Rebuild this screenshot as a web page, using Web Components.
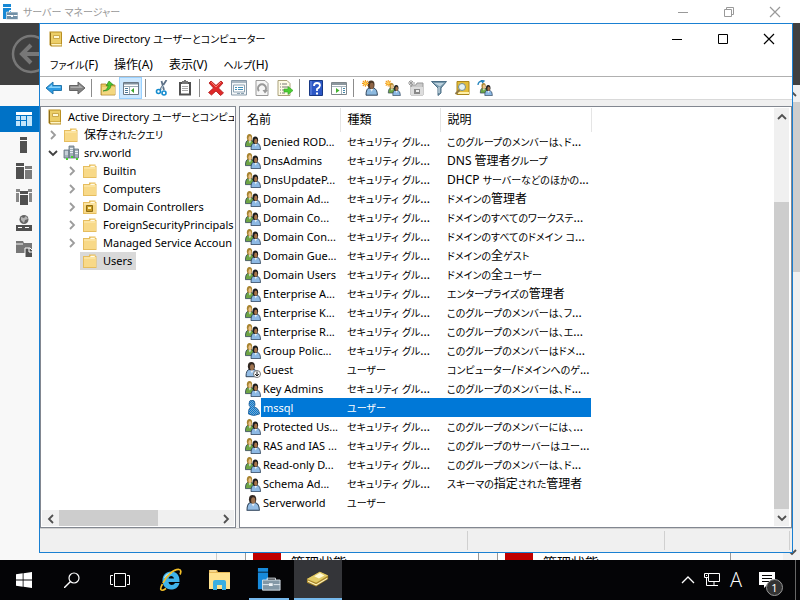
<!DOCTYPE html>
<html lang="ja">
<head>
<meta charset="utf-8">
<title>Active Directory ユーザーとコンピューター</title>
<style>
html,body{margin:0;height:100%}
body{font-family:"Noto Sans","Noto Sans CJK JP",sans-serif;font-size:12px;line-height:18px;color:#000;font-feature-settings:"palt";overflow:hidden}
</style>
</head>
<body>
<desktop-shell></desktop-shell>
<script>
const folder='<path d="M1 3h6V1.500h6.500V3h1v12H1z" fill="#e6bd5e"/><path d="M2 4h6l1-1.500h4V4h.8v10H2z" fill="#fbe3a0"/><path d="M8.500 3.500h4" stroke="#fffbe8"/><path d="M2 6h11.800v8H2z" fill="#f8d988"/>';
const person=(x,y,hair,body,face,sx=1,sy=1)=>`<g transform="translate(${x} ${y}) scale(${sx} ${sy})"><path d="M0 10.500Q0 5.500 3 5.200L6 5.200Q9.500 6 9.500 10.500z" fill="${body}" stroke="#263b52" stroke-width=".7"/><ellipse cx="4.300" cy="3" rx="2.800" ry="3" fill="${hair}"/><ellipse cx="4.800" cy="3.800" rx="1.600" ry="2.200" fill="${face}"/><path d="M3.500 6l1.200 2L6 6z" fill="#e6eef5"/></g>`;
const star='<path d="M4 0v8M0 4h8M1 1l6 6M7 1L1 7" stroke="#f39a16" stroke-width="1.300"/><circle cx="4" cy="4" r="1.500" fill="#ffd75c"/>';
const two=person(.4,0,'#a88430','#6ea545','#e8c28a',.95,1.2)+person(6,2.500,'#1c1c1c','#8db9e4','#a8754b',1,1.25);
const ICONS={
folder,
ou:folder+'<path d="M4.500 6.500h6v6h-6z" fill="#c99b22" stroke="#8c6b13"/><path d="M6 8h3v2H6z" fill="#fff0a8"/>',
book:'<path d="M1.500 .5h12l.5 1v14H3l-1.500-1.500z" fill="#b98f22"/><path d="M3 1.500h10v11H3z" fill="#ecce68"/><path d="M3 13h10.500v1.500H4z" fill="#fff6ca"/><path d="M5.500 4.500h6v3h-6z" fill="#fff8d6" stroke="#c09b37" stroke-width=".8"/><path d="M2.500 2v12" stroke="#8f6d18"/>',
domain:'<path d="M1 5h5v8H1zM6 1h5v12H6zM11 4h4.500v9H11z" fill="#a3b0ba" stroke="#60717f" stroke-width=".8"/><path d="M2 7h3M2 9h3M7 3.500h3M7 5.500h3M7 7.500h3M12 6.500h3M12 8.500h3" stroke="#e8eff4"/><path d="M3 13h2v2H3zM8 11h2v2H8zM13 13h2v2h-2z" fill="#46d52c"/>',
group:two,
user:person(2,0,'#332821','#94bde5','#9e7350',1.3,1.45),
guest:person(1,0,'#332821','#94bde5','#9e7350',1.25,1.4)+'<circle cx="12" cy="12" r="3.500" fill="#fff" stroke="#777"/><path d="M12 9.500v4M10.200 12l1.800 2 1.800-2" stroke="#111" fill="none"/>',
picked:'<defs><pattern id="p" width="2" height="2" patternUnits="userSpaceOnUse"><rect width="2" height="2" fill="#0078d7"/><path d="M0 0h1v1H0zM1 1h1v1H1z" fill="#80a9c7"/></pattern></defs><path d="M4 4q0-4 3-4t3 4q0 2-1 3 5 1 5.500 7-6 3-11 0-.5-5 2-7-1.500-1-1.500-3z" fill="url(#p)" stroke="#155995" stroke-width=".8"/>',
back:'<path d="M0 8l7-6v3.500h8.500v5H7V14z" fill="#2d9be3" stroke="#2477ad"/><path d="M2 8l4-3.500v2h8.500v1.500z" fill="#87d2fa"/>',
fwd:'<path d="M16 8L9 2v3.500H.5v5H9V14z" fill="#838383" stroke="#646464"/><path d="M14 8l-4-3.500v2H1.500V8z" fill="#acacac"/>',
up:'<path d="M1 4h5l1 1h8v10H1z" fill="#e9c65e" stroke="#aa812b" stroke-width=".8"/><path d="M2 7h13v7.500H2z" fill="#f3d780"/><path d="M3 11q5-1 5-6L6 6l3-5 4.500 4H11Q11 11 3 11z" fill="#4ac62d" stroke="#287f1f" stroke-width=".6"/>',
pane:'<path d="M.5 2.500h15v12H.5z" fill="#fff" stroke="#6c7985"/><path d="M1 3h14v1.500H1z" fill="#8494a1"/><path d="M1 6.500h14M6.500 7v7" stroke="#9cabb7"/><path d="M2 8.500h3M2 10.500h3M2 12.500h3" stroke="#4d7997"/><path d="M11 8v5l-3-2.500z" fill="#39a327"/>',
cut:'<path d="M12.500 0L6 10M7.500 1l2.500 9" stroke="#5e7187" stroke-width="1.800"/><path d="M7 9l3-4" stroke="#c8dce8"/><circle cx="4.500" cy="11.500" r="2" fill="none" stroke="#168dcf" stroke-width="1.600"/><circle cx="10" cy="13" r="2" fill="none" stroke="#168dcf" stroke-width="1.600"/>',
paste:'<path d="M2 2h12v13.500H2z" fill="#505050"/><path d="M4 4h8v9.500H4z" fill="#fff"/><path d="M5 1h2V0h2v1h2v3H5z" fill="#777"/><path d="M5 6.500h6M5 8.500h6M5 10.500h6" stroke="#aaa"/>',
del:'<path d="M1 3l2-2 5 4.500L13 1l2 2-4.500 5 5 5-3 2.500L8 11l-4.500 4L.5 12.500 5.500 8z" fill="#df2929" stroke="#b01717" stroke-width=".8"/><path d="M3 2l5 5 5-5" stroke="#f67b6b" fill="none"/>',
prop:'<path d="M.5 .5h15v14.500H.5z" fill="#f4f7f9" stroke="#8799a8"/><path d="M1 1h14v2H1z" fill="#a9b7c2"/><path d="M2.500 5h11v7h-11z" fill="#fff" stroke="#8da2b2"/><path d="M4 7.500h2M7 7.500h5M4 9.500h2M7 9.500h5" stroke="#3f90b9"/><path d="M6 13.500h3M10 13.500h3" stroke="#8ba2b2"/>',
refresh:'<path d="M2 .5h9l3 3v12H2z" fill="#f6f6f6" stroke="#999"/><path d="M5 11a4 4 0 1 1 6 0" fill="none" stroke="#999" stroke-width="2"/><path d="M8.500 10H14l-3 3.500z" fill="#999"/>',
export:'<path d="M1 .5h9l3 3v12H1z" fill="#fffbe6" stroke="#aaa17b"/><path d="M3 4h1M5 4h5M3 7h1M5 7h6M3 10h1M5 10h3M3 13h1M5 13h3" stroke="#777"/><path d="M7 9h4V6.500l5 4-5 4V12H7z" fill="#4dce33" stroke="#38a928" stroke-width=".7"/>',
help:'<path d="M1.500 .5h13v15h-13z" fill="#2c57c5" stroke="#173783"/><path d="M3 1v14" stroke="#6e90e5"/><path d="M6 6Q6 3 9 3t3 2.500Q12 7 9 9v2" stroke="#fff" stroke-width="1.800" fill="none"/><path d="M8 12.500h2v2H8z" fill="#fff"/>',
act:'<path d="M.5 2.500h15v12H.5z" fill="#fff" stroke="#7f878c"/><path d="M1 3h14v2H1z" fill="#8c979e"/><path d="M1 6.500h14M10.500 7v7" stroke="#a6b4bd"/><path d="M5 8v5l3.500-2.500z" fill="#42b330"/><path d="M12 8.500h2M12 10.500h2M12 12.500h2" stroke="#4285a5"/>',
newuser:person(4,.5,'#4d3826','#8cb9df','#8e6546',1.2,1.4)+'<g transform="scale(.85)">'+star+'</g>',
newgroup:'<g transform="translate(3 3) scale(.8)">'+two+'</g><g transform="scale(.8)">'+star+'</g>',
newou:'<path d="M3 5h5l1-2h6v12H3z" fill="#c9c9c9" stroke="#999"/><path d="M3 7h12v8H3z" fill="#ddd"/><path d="M6 9h6v5H6z" fill="#888"/><path d="M8 10h3v2H8z" fill="#eee"/><path d="M3 0v7M0 3h7M1 1l4 4M5 1L1 5" stroke="#999"/>',
filter:'<path d="M.5 1.500h15L10 8v5l-3 2.500V8z" fill="#7899ac" stroke="#4c6f86"/><path d="M3 3h10L9 6.500z" fill="#bdd3df"/><path d="M8 7v6" stroke="#dbe8ef"/>',
find:'<path d="M3 1.500h12v13H3z" fill="#e4bd39" stroke="#aa851b"/><path d="M4 12h11v2H4z" fill="#fff0a9"/><circle cx="8" cy="7" r="3.500" fill="#e5f3f6" stroke="#718b92"/><path d="M5.500 10l-4 4" stroke="#8f7846" stroke-width="2"/>',
addto:'<g transform="translate(3 3) scale(.8)">'+two+'</g><path d="M1 5Q1 1 6 1M4 0l3 1-2 2" stroke="#2485be" stroke-width="1.300" fill="none"/>',
sm:'<path d="M1 0h8v3H1zM1 4h8v11H1z" fill="#1688d5"/><path d="M4.500 8h11.500v7.500H4.500z" fill="#7190a6" stroke="#fff" stroke-width=".6"/><path d="M7.500 8V6.500h5V8M5 11.500h4M11.500 11.500h4" fill="none" stroke="#fff"/><path d="M9 11h2v2H9z" fill="#fff"/>',
dash:'<path d="M0 5h4v4H0zM0 10h4v5H0zM5 5h5v4H5zM5 10h5v5H5zM11 5h5v10h-5z" fill="#c3e5fb"/><path d="M0 1h16v3H0z" fill="#fff"/>',
srv:'<path d="M4 0h7v3H4zM4 4h7v12H4z" fill="#505050"/>',
srvs:'<path d="M0 0h8v3H0zM0 4h8v12H0z" fill="#505050"/><path d="M9 3h7v3H9zM9 7h7v9H9z" fill="#7b7b7b"/>',
all:'<path d="M0 0h4v3H0zM12 0h4v3h-4zM0 4h3v9H0zM13 4h3v9h-3z" fill="#888"/><path d="M4 2h8v3H4zM4 6h8v10H4z" fill="#505050"/>',
web:'<circle cx="8" cy="4.500" r="4.500" fill="#666"/><path d="M5 2l3 1 2-2 2 3-3 1-1 3-3-3z" fill="#b5b5b5"/><path d="M0 10h16v6H0z" fill="#505050"/><path d="M2 12.500h4M9 12.500h4" stroke="#fff"/>',
files:'<path d="M0 0h7l1 2h8v10H0z" fill="#777"/><path d="M0 3h7" stroke="#f7f7f7"/><path d="M9 7h5l3 3v7H9z" fill="#505050" stroke="#fff"/><path d="M13 7v4h4" stroke="#fff" fill="none"/>',
circle:'<circle cx="22" cy="22" r="18" fill="none" stroke="#777" stroke-width="2.500"/><path d="M31 22H13M22 13l-9 9 9 9" fill="none" stroke="#777" stroke-width="4"/>',
min:'<path d="M3 8.500h10" stroke="currentColor"/>',
max:'<path d="M3.500 3.500h9v9h-9z" fill="none" stroke="currentColor"/>',
restore:'<path d="M3.500 5.500h7v7h-7zM5.500 5V3.500h7v7H11" fill="none" stroke="currentColor"/>',
close:'<path d="M3 3l10 10M13 3L3 13" stroke="currentColor" stroke-width="1.200"/>',
cr:'<path d="M6 4l4 4-4 4" fill="none" stroke="currentColor" stroke-width="1.800"/>',
cl:'<path d="M10 4L6 8l4 4" fill="none" stroke="currentColor" stroke-width="1.800"/>',
cd:'<path d="M4 6l4 4 4-4" fill="none" stroke="currentColor" stroke-width="1.800"/>',
cu:'<path d="M4 10l4-4 4 4" fill="none" stroke="currentColor" stroke-width="1.800"/>',
tray:'<path d="M2 11l6-6 6 6" fill="none" stroke="#fff" stroke-width="1.300"/>',
win:'<path d="M0 2.300L6.700 1.300V7.600H0zM7.500 1.200L16 0v7.600H7.500zM0 8.400h6.700v6.300L0 13.700zM7.500 8.400H16V16l-8.500-1.200z" fill="#fff"/>',
search:'<circle cx="10" cy="6" r="5" fill="none" stroke="#fff" stroke-width="1.200"/><path d="M6.500 9.500L0 16" stroke="#fff" stroke-width="1.400"/>',
views:'<path d="M4.500 1.500h11v13h-11z" fill="none" stroke="#fff"/><path d="M3 3.500H.5v9H3M17 3.500h2.500v9H17" fill="none" stroke="#fff"/>',
ie:'<path d="M12 3.500c5.500 0 9 4 8.500 10.500H9.500c.5 3.500 5 4 6.500 1h4.500C19 20 16 21.500 12 21.500 7 21.500 3.500 18 3.500 12.500S7 3.500 12 3.500zM9.500 10.500h5.500c-.5-3.500-5-3.500-5.500 0z" fill="#3fb4ea" fill-rule="evenodd"/><path d="M5.500 10q2-4.500 7-4.800" stroke="#a8e5ff" fill="none" stroke-width="1.400"/><path d="M3.500 16C0 22 2 24 7 20.500M4 15C7 8 15 1 20 1.500c2.500.3 2 3 1 5" fill="none" stroke="#f3bf28" stroke-width="1.700"/>',
explorer:'<path d="M1 2h8l1 2h12v17H1z" fill="#e7b958"/><path d="M1 5h21v16H1z" fill="#ffe28f"/><path d="M2 3h6" stroke="#fff3c4"/><path d="M5 14q0-2 2-2h9q2 0 2 2v8h-4v-5H9v5H5z" fill="#3aaee1"/>',
smbig:'<path d="M1 0h11v4H1zM1 5h11v18H1z" fill="#178adb"/><path d="M6 13h19v11H6z" fill="#8297a6" stroke="#d7e1e8"/><path d="M11 13v-2h9v2M6 18h7M18 18h7" fill="none" stroke="#e7eff4"/><path d="M13 16.500h4v3h-4z" fill="#eef3f7"/>',
ad:'<path d="M1 12L15 4l9 4v4l-13 8-10-4z" fill="#a8862a"/><path d="M1 12L15 4l9 4-13 8z" fill="#e2cb68"/><path d="M2 13.500l9 4 12-7v1.500l-12 7-9-4z" fill="#fff4bd"/><path d="M9 9l6-3.500 5 2.500-6 3.500z" fill="#fff9d2"/>',
net:'<path d="M4.500 1.500h11v8h-11zM10 10v3M6 13.500h8" fill="none" stroke="#fff"/><path d="M.5 1.500h4v4h-4zM2.500 5.500v8H6" fill="#040406" stroke="#fff"/><path d="M2 3h1v1H2z" fill="#fff"/>',
note:'<path d="M0 0h16v13H8l-3 3v-3H0z" fill="#fff"/><path d="M3 3.500h10M3 6.500h10M3 9.500h7" stroke="#050505"/>'
};
const BOX={circle:'0 0 44 44',views:'0 0 20 16',ie:'0 0 24 24',explorer:'0 0 24 24',smbig:'0 0 26 26',ad:'0 0 26 26'};
// Kana are set smaller than kanji and Latin, as in condensed Japanese UI faces.
const kana=s=>s.replace(/[\u3040-\u30ff、]+/g,'<span class="k">$&</span>');
function define(name,html,setup){
  const t=document.createElement('template');t.innerHTML=html;
  customElements.define(name,class extends HTMLElement{
    connectedCallback(){
      if(this.shadowRoot)return;
      const r=this.attachShadow({mode:'open'});r.append(t.content.cloneNode(true));
      if(setup)setup(this,r);
    }
  });
}
const RESET='*{box-sizing:border-box}.k{font-size:10px;line-height:10px}button{font:inherit;font-feature-settings:inherit;color:inherit;background:none;border:0;padding:0;margin:0}';

define('ui-icon','<style>:host{display:block;flex:none;width:var(--s,16px);height:var(--s,16px)}svg{display:block;width:100%;height:100%}</style>',(el,r)=>{
  const n=el.getAttribute('name');
  r.innerHTML+=`<svg viewBox="${BOX[n]||'0 0 16 16'}" aria-hidden="true">${ICONS[n]}</svg>`;
});

define('title-bar',`<style>${RESET}
:host{display:flex;align-items:center}
.t{flex:1;white-space:nowrap;padding-left:5px}
button{width:46px;height:100%;display:grid;place-items:center}
</style><slot name="icon"></slot><span class="t"><slot></slot></span>
<button aria-label="最小化"><ui-icon name="min"></ui-icon></button><button class="m" aria-label="最大化"></button><button aria-label="閉じる"><ui-icon name="close"></ui-icon></button>`,(el,r)=>{
  r.querySelector('.m').innerHTML=`<ui-icon name="${el.hasAttribute('maximized')?'restore':'max'}"></ui-icon>`;
});

define('scroll-bar',`<style>${RESET}
:host{display:flex;background:#f0f0f0;color:#505050}
:host([vertical]){flex-direction:column}
button{flex:none;width:17px;height:17px;display:grid;place-items:center}
:host([vertical]) button{width:100%}
.before{flex:var(--before,0) 0 0}.thumb{flex:var(--thumb,1) 0 0;background:#cdcdcd}.after{flex:var(--after,0) 0 0}
</style><button class="a" aria-label="戻る"></button><span class="before"></span><span class="thumb"></span><span class="after"></span><button class="b" aria-label="進む"></button>`,(el,r)=>{
  const v=el.hasAttribute('vertical');
  r.querySelector('.a').innerHTML=`<ui-icon name="${v?'cu':'cl'}"></ui-icon>`;
  r.querySelector('.b').innerHTML=`<ui-icon name="${v?'cd':'cr'}"></ui-icon>`;
});

define('menu-bar',`<style>${RESET}
:host{display:flex;gap:16px;height:22px;padding:0 10px;align-items:center}
button{white-space:nowrap}
</style>${['ファイル(F)','操作(A)','表示(V)','ヘルプ(H)'].map(m=>`<button>${kana(m)}</button>`).join('')}`);

define('tool-bar',`<style>${RESET}
:host{display:flex;height:24px;padding:0 2px;align-items:center;border-top:1px solid #b0b0b0;border-bottom:1px solid #d9d9d9}
button{width:23px;height:22px;display:grid;place-items:center}
button[aria-pressed=true]{background:#cce8ff;border:1px solid #99d1ff}
i{width:1px;height:18px;background:#8c8c8c;margin:0 4px 0 3px}
</style>`,(el,r)=>{
  const items=[['back','戻る'],['fwd','進む'],0,['up','1つ上'],['pane','ツリー表示',1],0,['cut','切り取り'],['paste','貼り付け'],0,['del','削除'],['prop','プロパティ'],['refresh','更新'],['export','エクスポート'],0,['help','ヘルプ'],['act','操作ウィンドウ'],0,['newuser','新規ユーザー'],['newgroup','新規グループ'],['newou','新規 OU'],['filter','フィルター'],['find','検索'],['addto','グループに追加']];
  r.innerHTML+=items.map(i=>i?`<button aria-label="${i[1]}"${i[2]?' aria-pressed="true"':''}><ui-icon name="${i[0]}"></ui-icon></button>`:'<i></i>').join('');
});

define('tree-item',`<style>${RESET}
:host{display:flex;height:18px;align-items:center;padding-left:calc(var(--level,0)*19px - 16px);white-space:nowrap;color:#000}
.x{flex:none;width:16px;height:16px;color:#9c9c9c}
.x.open{color:#404040}
.x:empty{visibility:hidden}
.n{display:flex;align-items:center;height:18px;padding:0 4px 0 2px;gap:5px}
:host([root]) .x{display:none}
:host([selected]) .n{background:#d9d9d9}
</style><button class="x" aria-label="展開"></button><button class="n"><ui-icon></ui-icon><span><slot></slot></span></button>`,(el,r)=>{
  const x=r.querySelector('.x'),s=el.getAttribute('state');
  if(s)x.innerHTML=`<ui-icon name="${s==='open'?'cd':'cr'}"></ui-icon>`;
  if(s==='open')x.classList.add('open');
  const ic=document.createElement('ui-icon');ic.setAttribute('name',el.getAttribute('icon'));
  r.querySelector('.n ui-icon').replaceWith(ic);
});

define('tree-pane',`<style>${RESET}
:host{display:flex;flex-direction:column;background:#fff;border:1px solid #828790;padding:1px;min-width:0}
.tree{flex:1;overflow:hidden}
scroll-bar{height:16px}
</style><div class="tree"><slot></slot></div><scroll-bar style="--thumb:100;--after:59"></scroll-bar>`);

define('user-list',`<style>${RESET}
:host{display:flex;background:#fff;border:1px solid #828790;padding:1px 2px 1px 0;min-width:0}
.v{flex:1;overflow:hidden;min-width:0}
table{border-collapse:collapse;table-layout:fixed;width:351px;font-size:12px}
th,td{padding:0 0 0 7px;text-align:left;font-weight:400;white-space:nowrap;overflow:hidden}
thead tr{height:24px}th{border-right:1px solid #e5e5e5}
tbody tr{height:19px}td{line-height:19px;vertical-align:top}
td:first-child{padding-left:5px;font-size:11px}
.c{display:flex;align-items:center}.c .n{padding-left:2px;flex:1}
tr.sel{color:#fff}tr.sel td{background:#0078d7}tr.sel td:first-child{background:none}tr.sel .n{background:#0078d7}
scroll-bar{width:15px}
</style><div class="v"><table><colgroup><col style="width:100px"><col style="width:100px"><col style="width:151px"></colgroup><thead><tr><th>名前</th><th>種類</th><th>説明</th></tr></thead><tbody></tbody></table></div>
<scroll-bar vertical style="--before:77;--thumb:307"></scroll-bar>`,(el,r)=>{
  const G='セキュリティ グル...',U='ユーザー',M='このグループのメンバーは、';
  const rows=[['Denied ROD...',G,M+'ド...'],['DnsAdmins',G,'DNS 管理者グループ'],['DnsUpdateP...',G,'DHCP サーバーなどのほかの...'],['Domain Ad...',G,'ドメインの管理者'],['Domain Co...',G,'ドメインのすべてのワークステ...'],['Domain Con...',G,'ドメインのすべてのドメイン コ...'],['Domain Gue...',G,'ドメインの全ゲスト'],['Domain Users',G,'ドメインの全ユーザー'],['Enterprise A...',G,'エンタープライズの管理者'],['Enterprise K...',G,M+'フ...'],['Enterprise R...',G,M+'エ...'],['Group Polic...',G,'このグループのメンバーはドメ...'],['Guest',U,'コンピューター/ドメインへのゲ...','guest'],['Key Admins',G,M+'ド...'],['mssql',U,'','picked'],['Protected Us...',G,'このグループのメンバーには、...'],['RAS and IAS ...',G,'このグループのサーバーはユー...'],['Read-only D...',G,M+'ド...'],['Schema Ad...',G,'スキーマの指定された管理者'],['Serverworld',U,'','user']];
  r.querySelector('tbody').innerHTML=rows.map(a=>`<tr${a[3]==='picked'?' class="sel"':''}><td><div class="c"><ui-icon name="${a[3]||'group'}"></ui-icon><span class="n">${a[0]}</span></div></td><td>${kana(a[1])}</td><td>${kana(a[2])}</td></tr>`).join('');
});

define('status-bar',`<style>
:host{display:grid;grid-template-columns:428px 197px 1fr;flex:none;height:24px;padding:2px 2px 2px 0;box-sizing:border-box;border-top:1px solid #d0d0d0}
span{border-right:1px solid #d0d0d0}
</style><span></span><span></span><span></span>`);

define('console-window',`<style>${RESET}
:host{display:flex;flex-direction:column;background:#f0f0f0;border:1px solid #1a80d2}
.top{background:#fff}
title-bar{height:30px;padding-left:8px}
.panes{flex:1;display:grid;grid-template:minmax(0,1fr)/196px 1fr;gap:3px;padding-top:6px;min-height:0}
.s{font-size:11px}
</style><div class="top"><title-bar class="s"><ui-icon slot="icon" name="book"></ui-icon>${kana('Active Directory ユーザーとコンピューター')}</title-bar><menu-bar></menu-bar><tool-bar></tool-bar></div>
<div class="panes"><tree-pane>
<tree-item class="s" root style="--level:1" icon="book">${kana('Active Directory ユーザーとコンピュー')}</tree-item>
<tree-item style="--level:1" state="closed" icon="folder">${kana('保存されたクエリ')}</tree-item>
<tree-item class="s" style="--level:1" state="open" icon="domain">srv.world</tree-item>
<tree-item class="s" style="--level:2" state="closed" icon="folder">Builtin</tree-item>
<tree-item class="s" style="--level:2" state="closed" icon="folder">Computers</tree-item>
<tree-item class="s" style="--level:2" state="closed" icon="ou">Domain Controllers</tree-item>
<tree-item class="s" style="--level:2" state="closed" icon="folder">ForeignSecurityPrincipals</tree-item>
<tree-item class="s" style="--level:2" state="closed" icon="folder">Managed Service Accoun</tree-item>
<tree-item class="s" style="--level:2" selected icon="folder">Users</tree-item>
</tree-pane><user-list></user-list></div><status-bar></status-bar>`);

define('status-tile',`<style>
:host{display:flex;align-items:flex-end;width:234px;box-sizing:border-box;border:solid #999;border-width:0 1px;padding-left:7px;background:#fff;gap:10px}
.b{width:28px;height:18px;background:#c00000}
.t{height:6px;font-size:14px;line-height:18px;white-space:nowrap}
</style><span class="b"></span><span class="t"><slot></slot></span>`);

define('server-manager',`<style>${RESET}
:host{display:grid;grid-template-rows:23px 62px 1fr;background:#f8f8f8}
title-bar{background:#fff;color:#999;padding-left:2px;padding-right:2px}
.head{background:#404040;display:flex;align-items:center;padding-left:9px;--s:44px}
.body{display:grid;grid-template-columns:217px 1fr 17px;min-height:0}
nav{padding-top:21px;border-right:1px solid #ccc}
nav button{display:block;width:100%;height:26px;padding-left:16px}
nav button[aria-current]{background:#0072c6}
.tiles{display:flex;gap:18px;padding-left:28px;min-width:0}
</style><title-bar maximized><ui-icon slot="icon" name="sm"></ui-icon>${kana('サーバー マネージャー')}</title-bar>
<div class="head"><ui-icon name="circle"></ui-icon></div>
<div class="body"><nav></nav><div class="tiles"><status-tile>管理状態</status-tile><status-tile>管理状態</status-tile></div><scroll-bar vertical style="--thumb:170;--after:271"></scroll-bar></div>`,(el,r)=>{
  r.querySelector('nav').innerHTML=[['dash','ダッシュボード'],['srv','ローカル サーバー'],['srvs','すべてのサーバー'],['all','AD DS'],['web','DNS'],['files','ファイル サービス']].map((a,i)=>`<button aria-label="${a[1]}"${i?'':' aria-current="page"'}><ui-icon name="${a[0]}"></ui-icon></button>`).join('');
});

define('task-bar',`<style>${RESET}
:host{display:flex;background:#040406;color:#fff}
button{display:grid;place-items:center;height:100%;width:48px}
.apps{display:flex;gap:1px;padding-left:3px;--s:24px}
.run{border-bottom:2px solid #76b9ed;padding-top:2px;width:40px;margin:0 4px}
.on{background:#343539;border-bottom:2px solid #76b9ed;padding-top:2px}
.v{--s:20px}
.tray{margin-left:auto;display:flex;border-right:1px solid #666;margin-right:4px;padding-right:9px}
.tray button{width:24px}
.lang{font-size:20px;font-family:"Open Sans",sans-serif;font-weight:300}
.tray .note{width:38px;position:relative}
.badge{position:absolute;left:18px;top:19px;width:17px;height:17px;border-radius:50%;background:#333;border:1px solid #999;font-size:11px;line-height:15px;text-align:center}
</style><button aria-label="スタート"><ui-icon name="win"></ui-icon></button><button aria-label="検索"><ui-icon name="search"></ui-icon></button><button class="v" aria-label="タスク ビュー"><ui-icon name="views"></ui-icon></button>
<div class="apps"><button aria-label="Internet Explorer"><ui-icon name="ie"></ui-icon></button><button aria-label="エクスプローラー"><ui-icon name="explorer"></ui-icon></button><button class="run" aria-label="サーバー マネージャー"><ui-icon name="smbig"></ui-icon></button><button class="on" aria-label="Active Directory"><ui-icon name="ad"></ui-icon></button></div>
<div class="tray"><button aria-label="隠れているインジケーター"><ui-icon name="tray"></ui-icon></button><button aria-label="ネットワーク"><ui-icon name="net"></ui-icon></button><button class="lang">A</button><button class="note" aria-label="通知"><ui-icon name="note"></ui-icon><span class="badge">1</span></button></div>`);

define('desktop-shell',`<style>
:host{display:grid;grid-template-rows:1fr 40px;height:100vh}
.work{position:relative;display:grid;min-height:0;overflow:hidden}
server-manager{min-height:0}
console-window{position:absolute;inset:23px 7px 7px 39px}
</style><div class="work"><server-manager></server-manager><console-window></console-window></div><task-bar></task-bar>`);
</script>
</body>
</html>
